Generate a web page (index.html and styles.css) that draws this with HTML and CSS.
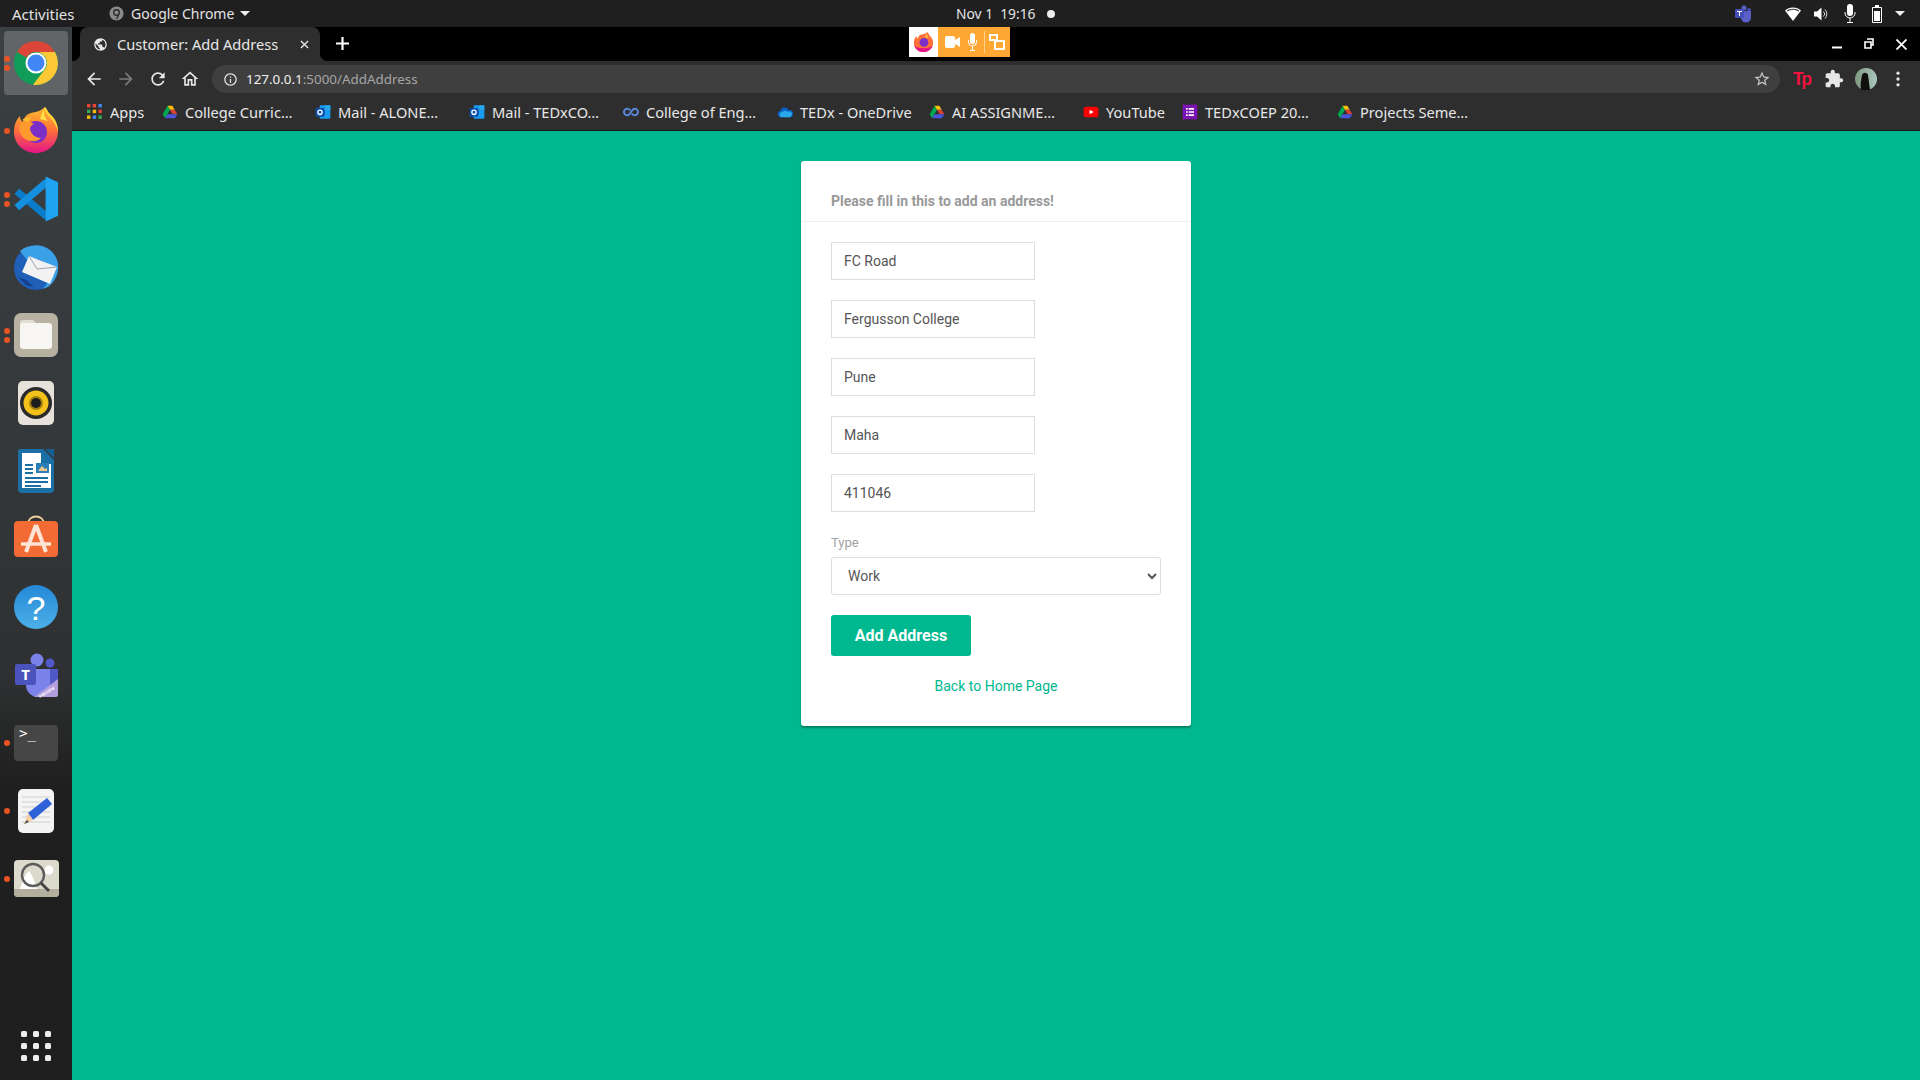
FILE: index.html
```html
<!DOCTYPE html>
<html lang="en">
<head>
  <meta charset="UTF-8" />
  <title>Customer: Add Address</title>
  <link rel="stylesheet" href="styles.css">
</head>
<body>

  <svg class="defs" aria-hidden="true">
    <symbol id="drive" viewBox="0 0 24 24">
      <path fill="#00a94f" d="M8.5 2.5 1 15.5l3.5 6L12 8.5z"/>
      <path fill="#ffc107" d="M8.5 2.5h7L19 8.5H12z"/>
      <path fill="#ea4335" d="M15.5 2.5 23 15.5h-7L12 8.5h7z" opacity=".9"/>
      <path fill="#4a55d8" d="M4.5 21.5 8 15.5h15l-3.5 6z"/>
    </symbol>
    <symbol id="outlook" viewBox="0 0 24 24">
      <rect x="7" y="2" width="16" height="20" rx="1" fill="#1a9bf0"/>
      <path fill="#28a8ea" d="M15 2h8v7h-8z"/>
      <path fill="#0a64c0" d="M7 9h8v7H7z"/>
      <rect x="1" y="6" width="13" height="13" rx="1" fill="#0a4fb0"/>
      <circle cx="7.5" cy="12.5" r="3.2" fill="none" stroke="#fff" stroke-width="2"/>
    </symbol>
  </svg>

  <header class="topbar">
    <div class="topbar-left">
      <span class="activities">Activities</span>
      <svg class="app-icon" viewBox="0 0 16 16"><circle cx="8" cy="8" r="7.5" fill="#8a8a8a"/><circle cx="8" cy="7" r="3" fill="none" stroke="#2a2a2a" stroke-width="1.4"/><path d="M10.5 9 8 14" stroke="#2a2a2a" stroke-width="1.2"/></svg>
      <span class="app-name">Google Chrome</span>
      <span class="caret"></span>
    </div>
    <div class="clock">
      <span>Nov 1&nbsp; 19:16</span>
      <span class="clock-dot"></span>
    </div>
    <div class="status">
      <svg class="st-teams" width="16" height="18" viewBox="0 0 16 18"><circle cx="9" cy="3" r="2.5" fill="#5b5fc7"/><circle cx="14" cy="5" r="2" fill="#464eb8"/><path fill="#5b5fc7" d="M6 6h10v6a5 5 0 0 1-10 1z"/><rect x="0" y="4" width="9" height="9" rx="1" fill="#464eb8"/><path fill="#fff" d="M2 6h5v1H5v4H4V7H2z"/></svg>
      <svg width="16" height="14" viewBox="0 0 16 14"><path fill="#fff" d="M8 14 0 3.5C2 1.5 5 .4 8 .4s6 1.1 8 3.1z"/><path fill="#1f1f1f" d="M2 3.6C3.600 2.400 5.700 1.700 8 1.700s4.400.7 6 1.900l-.6.800C12 3.400 10.100 2.800 8 2.800s-4 .6-5.400 1.600z"/></svg>
      <svg width="14" height="14" viewBox="0 0 14 14"><path fill="#fff" d="M0 4.500h3L7.500.5v13L3 9.500H0z"/><path fill="none" stroke="#ddd" d="M9.500 4.500a3.500 3.500 0 0 1 0 5M11 2.500a6.500 6.500 0 0 1 0 9"/></svg>
      <svg class="st-mic" width="12" height="20" viewBox="0 0 12 20"><rect x="3" y="0" width="6" height="12" rx="3" fill="#fff"/><path fill="none" stroke="#fff" d="M1 8v1a5 5 0 0 0 10 0V8M6 14v4M3 18.500h6"/></svg>
      <svg width="10" height="18" viewBox="0 0 10 18"><path fill="none" stroke="#fff" d="M.5 2.500h9v15h-9z"/><rect x="3" y="0" width="4" height="2" fill="#fff"/><rect x="2" y="6" width="6" height="10" fill="#fff"/></svg>
      <span class="caret"></span>
    </div>
  </header>

  <div class="desk">
    <nav class="dock">
      <div class="dock-item active">
        <span class="dots"><i></i><i></i></span>
        <svg viewBox="0 0 48 48"><circle cx="24" cy="24" r="22" fill="#0f9d58"/><path fill="#db4437" d="M24 2a22 22 0 0 1 19 11H24a11 11 0 0 0-9.500 5.500L5 13A22 22 0 0 1 24 2z"/><path fill="#fcc934" d="M43 13H24a11 11 0 0 1 9.500 16.500L21 45.800A22 22 0 0 0 43 13z"/><circle cx="24" cy="24" r="10.500" fill="#fff"/><circle cx="24" cy="24" r="8.500" fill="#4285f4"/></svg>
      </div>
      <div class="dock-item">
        <span class="dots"><i></i></span>
        <svg viewBox="0 0 48 48"><defs><linearGradient id="fx" x1="0" y1="0" x2="0" y2="1"><stop offset="0" stop-color="#ffbd2e"/><stop offset=".5" stop-color="#ff7139"/><stop offset="1" stop-color="#e31587"/></linearGradient></defs><path fill="url(#fx)" d="M33 0c3 3 3 6 5 8 5 5 8 10 8 16 0 13-10 22-22 22S2 37 2 25c0-7 2-12 6-16 0 3 1 5 3 6 1-5 4-8 8-9 5-1 10-2 14-6z"/><path fill="#ffd43b" d="M33 0c-1 5 3 8 7 13 3 4 5 8 6 12 0-10-4-14-8-18-2-2-3-4-5-7z"/><path fill="#ffe34d" d="M33 1c-2 5-1 9 3 13l-8-2c1-4 3-8 5-11z"/><circle cx="24" cy="25" r="11" fill="#7b2fc6"/><path fill="#ff9a2e" d="M8 16c5-3 10-2 14 1-3 1-4 3-4 5 1 5 5 9 11 9-5 5-15 4-19-2-3-4-3-9-2-13z"/><path fill="#ffbd2e" d="M10 13c3-2 6-3 9-2l-3 4c-2-1-4-1-6-2z"/></svg>
      </div>
      <div class="dock-item">
        <span class="dots"><i></i><i></i></span>
        <svg viewBox="0 0 100 100" class="ic-code"><path stroke="#0a7cc9" stroke-width="15" d="M10 34 73 87"/><path stroke="#1590e0" stroke-width="15" d="M10 68 73 14"/><path fill="#1fa3f3" d="M70 3l26 12v70L70 97z"/></svg>
      </div>
      <div class="dock-item">
        <svg viewBox="0 0 48 48"><circle cx="24" cy="25" r="22" fill="#1f5fb8"/><path fill="#3aa1e8" d="M8 8c8-7 22-8 30-1 6 5 9 12 8 20-1 8-6 14-10 17l-6 2c8-6 10-16 5-24-5-6-14-8-20-5-3-4-5-6-7-9z"/><path fill="#f2f2f2" d="M10 29 17 13l28 11-7 17z"/><path fill="none" stroke="#9aa4ae" d="m17 13 8 13 20-2"/><path fill="#163f8a" d="m6 34 8 8 8 2-8-7z"/></svg>
      </div>
      <div class="dock-item">
        <span class="dots"><i></i><i></i></span>
        <svg viewBox="0 0 48 48" class="ic-files"><rect x="2" y="2" width="44" height="44" rx="7" fill="#b7b1a2"/><path fill="#e2ded6" d="M8 12a3 3 0 0 1 3-3h10l4 4H8z"/><rect x="8" y="12" width="32" height="26" rx="3" fill="#f8f6f3"/></svg>
      </div>
      <div class="dock-item">
        <svg viewBox="0 0 48 48"><rect x="6" y="2" width="36" height="44" rx="5" fill="#e6e2d9"/><circle cx="24" cy="24" r="16" fill="#2a2a2c"/><circle cx="24" cy="24" r="12.500" fill="#f2c21a"/><circle cx="24" cy="24" r="7" fill="#a5800c"/><circle cx="24" cy="24" r="5" fill="#1d1d1d"/></svg>
      </div>
      <div class="dock-item">
        <svg viewBox="0 0 48 48"><path fill="#1c6fa5" d="M9 2h22l11 11v29a4 4 0 0 1-4 4H10a4 4 0 0 1-4-4V5a3 3 0 0 1 3-3z"/><path fill="#fff" d="M10 6h19v11h10v24H10z"/><path fill="#145f94" d="M33 2h9v9z"/><path fill="#1c6fa5" d="M13 17h8v2h-8zm0 4h8v2h-8zm0 4h8v2h-8zm0 5h23v2H13zm0 4h23v2H13zm0 4h16v2H13z"/><rect x="24" y="16" width="13" height="10" fill="#2b7fb8"/><path fill="#f0c98a" d="M26 24l4-5 3 3 2-1v3z"/></svg>
      </div>
      <div class="dock-item">
        <svg viewBox="0 0 48 48"><path fill="none" stroke="#f3cf9c" stroke-width="1.800" d="M16 9c0-10 16-10 16 0"/><rect x="2" y="6" width="44" height="36" rx="4" fill="#f26b35"/><path fill="none" stroke="#fde3d6" stroke-width="4" d="M24 10 14 37M24 10l10 27"/><path fill="none" stroke="#fde3d6" stroke-width="3.500" d="M9 29h30"/></svg>
      </div>
      <div class="dock-item">
        <svg viewBox="0 0 48 48"><defs><linearGradient id="hp" x1="0" y1="0" x2="0" y2="1"><stop offset="0" stop-color="#2588d6"/><stop offset="1" stop-color="#4cb0ea"/></linearGradient></defs><circle cx="24" cy="24" r="22" fill="url(#hp)"/><text x="24" y="37" class="help-mark">?</text></svg>
      </div>
      <div class="dock-item">
        <svg viewBox="0 0 48 48"><g transform="translate(0 1)"><circle cx="25" cy="8" r="6.500" fill="#7b83eb"/><circle cx="38" cy="11" r="4.500" fill="#5059c9"/><path fill="#5059c9" d="M30 17h16v12a8 8 0 0 1-16 0z"/><path fill="#7b83eb" d="M14 17h24v16a12 12 0 0 1-24 0z"/><rect x="3" y="12" width="21" height="21" rx="2" fill="#4b53bc"/><text x="13.500" y="28" class="teams-mark">T</text><path fill="#b39ddb" d="M46 27v16a2 2 0 0 1-2 2H22z"/><text x="35.500" y="41.500" class="teams-note" transform="rotate(-32 35.500 41.500)">PREVIEW</text></g></svg>
      </div>
      <div class="dock-item">
        <span class="dots"><i></i></span>
        <svg viewBox="0 0 48 48"><rect x="2" y="6" width="44" height="36" rx="4" fill="#464646"/><text x="7" y="19" class="term-mark">&gt;_</text></svg>
      </div>
      <div class="dock-item">
        <span class="dots"><i></i></span>
        <svg viewBox="0 0 48 48"><rect x="6" y="2" width="36" height="44" rx="5" fill="#f4f4f4"/><path stroke="#cfcfcf" d="M10 10h28M10 15h28M10 20h28M10 25h28M10 30h28M10 35h28"/><path fill="#2f62d9" d="M16 26 35 11l5 6-19 16z"/><path fill="#f3cfa8" d="m16 26 5 7-9 4z"/><path fill="#444" d="m12 37 3-4 2 2z"/></svg>
      </div>
      <div class="dock-item">
        <span class="dots"><i></i></span>
        <svg viewBox="0 0 48 48"><rect x="2" y="5" width="45" height="37" rx="4" fill="#dcd9cd"/><path fill="#fff" d="M8 34c3-10 6-16 9-18 2 2 5 8 8 18z"/><circle cx="37" cy="15" r="4.500" fill="#fff"/><path fill="#b3af9f" d="M2 34h45v4a4 4 0 0 1-4 4H6a4 4 0 0 1-4-4z"/><circle cx="21" cy="20" r="11" fill="none" stroke="#5c5c5c" stroke-width="2.400"/><path stroke="#444" stroke-width="3" d="m29 28 8 8"/></svg>
      </div>
      <div class="dock-apps">
        <i></i><i></i><i></i><i></i><i></i><i></i><i></i><i></i><i></i>
      </div>
    </nav>

    <div class="browser">
      <div class="tabstrip">
        <div class="tab">
          <svg class="tab-globe" viewBox="0 0 24 24"><path d="M12 2C6.480 2 2 6.480 2 12s4.480 10 10 10 10-4.480 10-10S17.520 2 12 2zm-1 17.930c-3.950-.49-7-3.850-7-7.930 0-.62.08-1.210.21-1.790L9 15v1c0 1.100.9 2 2 2v1.930zm6.900-2.540c-.26-.81-1-1.390-1.900-1.390h-1v-3c0-.55-.45-1-1-1H8v-2h2c.55 0 1-.45 1-1V7h2c1.100 0 2-.9 2-2v-.41c2.930 1.190 5 4.060 5 7.410 0 2.080-.8 3.970-2.100 5.390z"/></svg>
          <span class="tab-title">Customer: Add Address</span>
          <svg class="tab-close" viewBox="0 0 10 10"><path d="M1 1l8 8M9 1 1 9"/></svg>
        </div>
        <svg class="tab-new" viewBox="0 0 12 12"><path d="M6 0v12M0 6h12"/></svg>
        <div class="win-controls">
          <button class="win-btn"><svg width="10" height="10" viewBox="0 0 10 10"><path d="M0 8.500h10" stroke="#fff" stroke-width="2"/></svg></button>
          <button class="win-btn"><svg width="10" height="12" viewBox="0 0 10 12"><path fill="none" stroke="#fff" stroke-width="1.600" d="M3 1h6v6H7M1 4h6v6H1z"/></svg></button>
          <button class="win-btn"><svg width="11" height="11" viewBox="0 0 11 11"><path stroke="#fff" stroke-width="1.800" d="M.5.5l10 10M10.500.5l-10 10"/></svg></button>
        </div>
      </div>

      <div class="toolbar">
        <button class="tool"><svg viewBox="0 0 24 24"><path d="M20 11H7.830l5.590-5.590L12 4l-8 8 8 8 1.410-1.410L7.830 13H20v-2z"/></svg></button>
        <button class="tool dim"><svg viewBox="0 0 24 24"><path d="M12 4l-1.410 1.410L16.170 11H4v2h12.170l-5.580 5.590L12 20l8-8z"/></svg></button>
        <button class="tool"><svg viewBox="0 0 24 24"><path d="M17.650 6.350C16.200 4.900 14.210 4 12 4c-4.420 0-7.990 3.580-7.990 8s3.570 8 7.990 8c3.730 0 6.840-2.550 7.730-6h-2.080c-.82 2.330-3.040 4-5.650 4-3.310 0-6-2.690-6-6s2.690-6 6-6c1.660 0 3.140.69 4.220 1.780L13 11h7V4l-2.350 2.350z"/></svg></button>
        <button class="tool"><svg viewBox="0 0 24 24"><path d="M12 5.690l5 4.500V18h-2v-6H9v6H7v-7.810l5-4.500M12 3L2 12h3v8h6v-6h2v6h6v-8h3L12 3z"/></svg></button>
        <div class="omnibox">
          <svg class="omni-info" viewBox="0 0 24 24"><path d="M11 7h2v2h-2zm0 4h2v6h-2zm1-9C6.480 2 2 6.480 2 12s4.480 10 10 10 10-4.480 10-10S17.520 2 12 2zm0 18c-4.410 0-8-3.590-8-8s3.590-8 8-8 8 3.590 8 8-3.590 8-8 8z"/></svg>
          <span class="url"><b>127.0.0.1</b>:5000/AddAddress</span>
          <svg class="omni-star" viewBox="0 0 24 24"><path d="M22 9.240l-7.190-.62L12 2 9.190 8.630 2 9.240l5.460 4.730L5.820 21 12 17.270 18.180 21l-1.630-7.030L22 9.240zM12 15.400l-3.760 2.270 1-4.280-3.320-2.880 4.380-.38L12 6.100l1.710 4.040 4.380.38-3.320 2.880 1 4.280L12 15.400z"/></svg>
        </div>
        <button class="tool"><span class="ext-tp">Tp</span></button>
        <button class="tool"><svg viewBox="0 0 24 24"><path d="M20.500 11H19V7c0-1.100-.9-2-2-2h-4V3.500C13 2.120 11.880 1 10.500 1S8 2.120 8 3.500V5H4c-1.100 0-1.990.9-1.990 2v3.800H3.500c1.490 0 2.700 1.210 2.700 2.700s-1.210 2.700-2.700 2.700H2V20c0 1.100.9 2 2 2h3.800v-1.500c0-1.490 1.210-2.700 2.700-2.700 1.490 0 2.700 1.210 2.700 2.700V22H17c1.100 0 2-.9 2-2v-4h1.500c1.380 0 2.500-1.120 2.500-2.500S21.880 11 20.500 11z"/></svg></button>
        <button class="tool"><svg class="avatar" viewBox="0 0 22 22"><defs><linearGradient id="av" x1="0" y1="0" x2="1" y2="0"><stop offset="0" stop-color="#7d9a7e"/><stop offset="1" stop-color="#a9c6c2"/></linearGradient></defs><circle cx="11" cy="11" r="11" fill="url(#av)"/><path fill="#10100f" d="M7 7c1-3 5-3 6 0l2 15H6c-1-5 0-10 1-15z"/></svg></button>
        <button class="tool"><svg viewBox="0 0 24 24"><circle cx="12" cy="5" r="2"/><circle cx="12" cy="12" r="2"/><circle cx="12" cy="19" r="2"/></svg></button>
      </div>

      <div class="bookmarks">
        <a class="bm"><svg viewBox="0 0 14 14"><g fill="#ea4335"><rect width="3" height="3"/><rect x="5" width="3" height="3"/><rect x="10" width="3" height="3" fill="#4285f4"/></g><g fill="#34a853"><rect y="5" width="3" height="3"/><rect x="5" y="5" width="3" height="3" fill="#fbbc05"/><rect x="10" y="5" width="3" height="3" fill="#ea4335"/></g><g fill="#fbbc05"><rect y="10" width="3" height="3"/><rect x="5" y="10" width="3" height="3" fill="#4285f4"/><rect x="10" y="10" width="3" height="3" fill="#34a853"/></g></svg>Apps</a>
        <a class="bm"><svg><use href="#drive"/></svg>College Curric…</a>
        <a class="bm"><svg><use href="#outlook"/></svg>Mail - ALONE…</a>
        <a class="bm"><svg><use href="#outlook"/></svg>Mail - TEDxCO…</a>
        <a class="bm"><svg viewBox="0 0 24 24"><path fill="none" stroke="#5a86d8" stroke-width="3" d="M11 9.500C9 7.500 7.800 7 6.500 7a5 5 0 0 0 0 10c1.800 0 3.500-1.500 5.500-5s3.700-5 5.500-5a5 5 0 0 1 0 10c-1.300 0-2.500-.5-4.500-2.500"/></svg>College of Eng…</a>
        <a class="bm"><svg viewBox="0 0 24 24"><path fill="#0a5fc4" d="M6 20a5 5 0 0 1-1-9.900A7 7 0 0 1 18 9a5.500 5.500 0 0 1 1 11z"/><path fill="#28a8ea" d="M8 20a4 4 0 0 1 0-8c2-3 7-2 8 0a4 4 0 0 1 6 5c-.5 2-2 3-3.500 3z"/></svg>TEDx - OneDrive</a>
        <a class="bm"><svg><use href="#drive"/></svg>AI ASSIGNME…</a>
        <a class="bm"><svg viewBox="0 0 24 24"><rect x="1" y="4" width="22" height="16" rx="4" fill="#f00"/><path fill="#fff" d="m10 8.500 6 3.500-6 3.500z"/></svg>YouTube</a>
        <a class="bm"><svg viewBox="0 0 24 24"><rect x="1" y="1" width="22" height="22" fill="#7b12b5"/><path fill="#fff" d="M6 6h2.500v2.500H6zm4 0h8v2.500h-8zm-4 4.800h2.500v2.500H6zm4 0h8v2.500h-8zM6 15.500h2.500V18H6zm4 0h8V18h-8z"/></svg>TEDxCOEP 20…</a>
        <a class="bm"><svg><use href="#drive"/></svg>Projects Seme…</a>
      </div>

      <main class="page">
        <div class="signup-form">
          <p class="form-head">Please fill in this to add an address!</p>
          <form class="form-body" onsubmit="return false;">
            <input class="field" type="text" value="FC Road" />
            <input class="field" type="text" value="Fergusson College" />
            <input class="field" type="text" value="Pune" />
            <input class="field" type="text" value="Maha" />
            <input class="field" type="text" value="411046" />
            <div class="type-group">
              <label class="type-label" for="addrType">Type</label>
              <select class="type-select" id="addrType">
                <option>Work</option>
                <option>Home</option>
              </select>
            </div>
            <button class="add-btn">Add Address</button>
            <a class="home-link" href="#">Back to Home Page</a>
          </form>
        </div>
      </main>
    </div>
  </div>

  <!-- firefox sharing indicator sits on top of the tab strip -->
  <div class="share-bar">
    <span class="share-logo">
      <svg width="21" height="22" viewBox="0 0 48 48"><path fill="#ff7139" d="M33 1c3 3 3 6 5 8 5 5 8 10 8 16 0 13-10 22-22 22S2 38 2 26c0-7 2-12 6-16 0 3 1 5 3 6 1-5 4-8 8-9 5-1 10-2 14-6z"/><path fill="#e31587" d="M3 32c3 10 12 15 21 15s18-6 21-15c-6 8-36 8-42 0z"/><path fill="#ffd43b" d="M33 2c-2 5-1 9 3 13l-8-2c1-4 3-8 5-11z"/><circle cx="25" cy="25" r="10" fill="#7b2fc6"/></svg>
    </span>
    <span class="share-tools">
      <svg width="15" height="12" viewBox="0 0 15 12"><rect y="0" width="10" height="12" rx="2" fill="#fff"/><path fill="#fff" d="m10 4 5-3v10l-5-3z"/></svg>
      <svg width="9" height="19" viewBox="0 0 9 19"><rect x="2" y="0" width="5" height="11" rx="2.500" fill="#fff"/><path fill="none" stroke="#fff" d="M.5 7v2a4 4 0 0 0 8 0V7M4.500 13v4M2 17.500h5"/></svg>
      <span class="share-sep"></span>
      <svg width="16" height="16" viewBox="0 0 16 16"><path fill="none" stroke="#fff" stroke-width="2" d="M1 1h7v5H1zM6 7h9v8H6z"/></svg>
    </span>
  </div>

</body>
</html>
```

FILE: styles.css
```css
* {
  box-sizing: border-box;
}

html, body {
  height: 100%;
}

body {
  margin: 0;
  overflow: hidden;
  display: flex;
  flex-direction: column;
  background: #1f1f1f;
  font-family: "Noto Sans", sans-serif;
  color: #eee;
}

.defs {
  display: none;
}

/* Gnome top bar */
.topbar {
  height: 27px;
  flex: none;
  display: grid;
  grid-template-columns: 956px auto 1fr;
  align-items: center;
  background: #1f1f1f;
  font-size: 14px;
  color: #e4e4e4;
}

.topbar-left {
  display: flex;
  align-items: center;
  padding-left: 12px;
}

.activities {
  width: 97px;
  font-size: 15px;
}

.app-icon {
  width: 15px;
  height: 15px;
  margin-right: 7px;
}

.app-name {
  margin-right: 6px;
}

.caret {
  display: block;
  width: 0;
  height: 0;
  border-left: 5px solid transparent;
  border-right: 5px solid transparent;
  border-top: 5px solid #eee;
}

.clock {
  display: flex;
  align-items: center;
  gap: 12px;
  font-size: 13.800px;
}

.clock-dot {
  width: 8px;
  height: 8px;
  border-radius: 50%;
  background: #eee;
}

.status {
  display: flex;
  align-items: center;
  justify-content: flex-end;
  gap: 13px;
  padding-right: 15px;
}

.st-teams {
  margin-right: 21px;
}

.st-mic {
  margin: 0 3px;
}

.desk {
  flex: 1;
  display: flex;
  min-height: 0;
}

/* Ubuntu dock */
.dock {
  width: 72px;
  flex: none;
  display: flex;
  flex-direction: column;
  padding-top: 2px;
  background: linear-gradient(180deg, #3a3f42 0%, #34383a 40%, #2e3031 62%, #1f1f1f 72%, #1e1e1e 100%);
}

.dock-item {
  position: relative;
  height: 68px;
  flex: none;
  display: flex;
  align-items: center;
  justify-content: center;
}

.dock-item svg {
  width: 48px;
  height: 48px;
}

.dock-item.active::before {
  content: "";
  position: absolute;
  left: 4px;
  top: 2px;
  width: 64px;
  height: 64px;
  border-radius: 4px;
  background: rgba(255, 255, 255, 0.2);
}

.dock-item.active svg {
  position: relative;
}

.dots {
  position: absolute;
  left: 4px;
  top: 0;
  bottom: 0;
  display: flex;
  flex-direction: column;
  justify-content: center;
  gap: 3px;
}

.dots i {
  display: block;
  width: 6px;
  height: 6px;
  border-radius: 50%;
  background: #e95420;
}

.ic-code path {
  fill: none;
}

.ic-code path:last-child {
  fill: #1fa3f3;
}

.help-mark {
  font: 34px "Liberation Sans", sans-serif;
  fill: #fff;
  text-anchor: middle;
}

.teams-mark {
  font: bold 15px "Noto Sans", sans-serif;
  fill: #fff;
  text-anchor: middle;
}

.teams-note {
  font: bold 4px "Noto Sans", sans-serif;
  fill: #fff;
  text-anchor: middle;
}

.term-mark {
  font: 14px "DejaVu Sans Mono", monospace;
  fill: #fff;
}

.dock-apps {
  margin-top: auto;
  margin-bottom: 19px;
  margin-left: 21px;
  width: 30px;
  display: grid;
  grid-template-columns: repeat(3, 6px);
  gap: 6px;
}

.dock-apps i {
  width: 6px;
  height: 6px;
  border-radius: 1.500px;
  background: #eee;
}

/* Chrome window */
.browser {
  flex: 1;
  min-width: 0;
  display: flex;
  flex-direction: column;
  background: #00b88f;
}

.tabstrip {
  height: 34px;
  flex: none;
  display: flex;
  align-items: flex-end;
  padding-left: 8px;
  padding-right: 3px;
  background: #000;
}

.tab {
  position: relative;
  width: 240px;
  height: 34px;
  display: flex;
  align-items: center;
  padding: 0 11px 0 13px;
  background: #2e2e2e;
  border-radius: 8px 8px 0 0;
  font-size: 14.600px;
  color: #e8e8e8;
}

.tab::before,
.tab::after {
  content: "";
  position: absolute;
  bottom: 0;
  width: 8px;
  height: 8px;
}

.tab::before {
  left: -8px;
  background: radial-gradient(circle at 0 0, transparent 8px, #2e2e2e 8.500px);
}

.tab::after {
  right: -8px;
  background: radial-gradient(circle at 100% 0, transparent 8px, #2e2e2e 8.500px);
}

.tab-globe {
  width: 15px;
  height: 15px;
  margin-right: 9px;
  fill: #e8e8e8;
}

.tab-title {
  flex: 1;
  white-space: nowrap;
}

.tab-close {
  width: 9px;
  height: 9px;
  stroke: #e8e8e8;
  stroke-width: 1.500;
}

.tab-new {
  width: 13px;
  height: 13px;
  margin: 0 0 11px 16px;
  stroke: #fff;
  stroke-width: 2;
}

.win-controls {
  margin-left: auto;
  height: 34px;
  display: flex;
  align-items: center;
}

.win-btn {
  width: 32px;
  height: 34px;
  padding: 0;
  display: flex;
  align-items: center;
  justify-content: center;
  background: none;
  border: none;
}

.toolbar {
  height: 36px;
  flex: none;
  display: flex;
  align-items: center;
  padding: 0 6px;
  background: #2e2e2e;
}

.tool {
  width: 32px;
  height: 28px;
  padding: 0;
  flex: none;
  display: flex;
  align-items: center;
  justify-content: center;
  background: none;
  border: none;
}

.tool svg {
  width: 20px;
  height: 20px;
  fill: #e6e6e6;
}

.tool.dim svg {
  fill: #7b7b7b;
}

.tool svg.avatar {
  width: 22px;
  height: 22px;
}

.ext-tp {
  font: bold 19px "Liberation Sans", sans-serif;
  letter-spacing: -2px;
  color: #f3123f;
  transform: scaleX(0.9);
}

.omnibox {
  flex: 1;
  height: 28px;
  margin: 0 6px;
  display: flex;
  align-items: center;
  padding: 0 9px 0 11px;
  background: #3f3f3f;
  border-radius: 14px;
}

.omni-info {
  width: 15px;
  height: 15px;
  margin-right: 8px;
  fill: #e6e6e6;
}

.url {
  flex: 1;
  font-size: 13.400px;
  color: #a6a6a6;
}

.url b {
  font-weight: 400;
  color: #f0f0f0;
}

.omni-star {
  width: 18px;
  height: 18px;
  fill: #c8c8c8;
}

.bookmarks {
  height: 33px;
  flex: none;
  display: grid;
  grid-template-columns: 75px 153px 154px 154px 154px 152px 154px 99px 155px 1fr;
  align-items: center;
  padding: 0 0 3px 15px;
  background: #2e2e2e;
  font-size: 14.600px;
  color: #e8e8e8;
}

.bm {
  display: flex;
  align-items: center;
  gap: 7px;
  white-space: nowrap;
}

.bm svg {
  width: 16px;
  height: 16px;
  flex: none;
}

/* page content */
.page {
  flex: 1;
  border-top: 1px solid #1c1c1c;
  display: flex;
  justify-content: center;
  align-items: flex-start;
  padding-top: 30px;
  background: #00b88f;
  font-family: Roboto, sans-serif;
  font-size: 14px;
}

.signup-form {
  width: 390px;
  background: #fff;
  border-radius: 3px;
  box-shadow: 0 2px 2px rgba(0, 0, 0, 0.3);
}

.form-head {
  margin: 0;
  padding: 31px 30px 11px;
  line-height: 18px;
  font-weight: 700;
  color: #999;
  border-bottom: 1px solid #eee;
}

.form-body {
  display: flex;
  flex-direction: column;
  align-items: flex-start;
  gap: 20px;
  padding: 20px 30px 30px;
}

.field {
  width: 204px;
  height: 38px;
  padding: 0 12px;
  border: 1px solid #ddd;
  border-radius: 0;
  background: #fff;
  font: 14px Roboto, sans-serif;
  color: #555;
}

.type-group {
  width: 100%;
  display: flex;
  flex-direction: column;
  gap: 4px;
}

.type-label {
  padding-top: 1px;
  line-height: 20px;
  font-size: 13px;
  color: #a1a1a1;
}

.type-select {
  width: 100%;
  height: 38px;
  padding: 0 12px;
  background: #fff;
  border: 1px solid #ddd;
  border-radius: 3px;
  font: 14px Roboto, sans-serif;
  color: #555;
}

.add-btn {
  width: 140px;
  height: 41px;
  padding: 0;
  background: #00b88f;
  border: none;
  border-radius: 3px;
  font: 700 16px Roboto, sans-serif;
  color: #fff;
}

.home-link {
  align-self: center;
  line-height: 20px;
  color: #00b88f;
  text-decoration: none;
}

/* firefox share indicator */
.share-bar {
  position: absolute;
  left: 909px;
  top: 27px;
  height: 30px;
  display: flex;
}

.share-logo {
  width: 29px;
  display: flex;
  align-items: center;
  justify-content: center;
  background: #fff;
}

.share-tools {
  width: 72px;
  display: flex;
  align-items: center;
  gap: 8px;
  padding-left: 7px;
  background: #ffa733;
}

.share-sep {
  width: 1px;
  height: 22px;
  margin: 0 -4px 0 -1px;
  background: #ffd08e;
}
```
